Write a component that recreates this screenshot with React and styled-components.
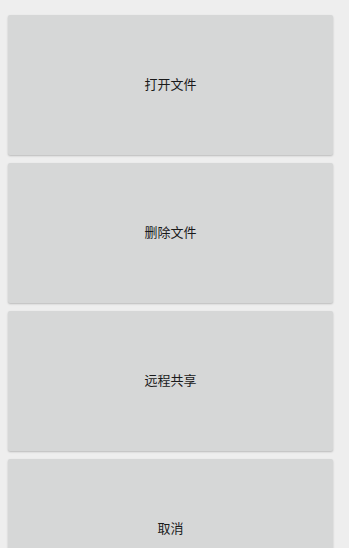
import React from "react";
import styled, { createGlobalStyle } from "styled-components";

const GlobalStyle = createGlobalStyle`
  html, body {
    margin: 0;
    padding: 0;
    background: #eeeeee;
    overflow: hidden;
  }
  body {
    font-family: "Noto Sans CJK SC", "Roboto", sans-serif;
  }
`;

const Menu = styled.div`
  display: flex;
  flex-direction: column;
  gap: 8px;
  padding: 15px 16px 0 8px;
`;

const ActionButton = styled.button`
  height: 140px;
  width: 100%;
  padding: 0 0 4px;
  border: none;
  border-radius: 2px;
  background: #d6d7d7;
  box-shadow: 0 1px 2px rgba(0, 0, 0, 0.22);
  color: #1a1a1a;
  font-family: inherit;
  font-size: 13px;
  line-height: 1;
  display: flex;
  align-items: center;
  justify-content: center;
  cursor: pointer;
  flex-shrink: 0;
`;

const App = () => {
  const actions = [
    { label: "打开文件" },
    { label: "删除文件" },
    { label: "远程共享" },
    { label: "取消" },
  ];

  return (
    <>
      <GlobalStyle />
      <Menu>
        {actions.map((item, index) => (
          <ActionButton key={index}>{item.label}</ActionButton>
        ))}
      </Menu>
    </>
  );
};

export default App;
